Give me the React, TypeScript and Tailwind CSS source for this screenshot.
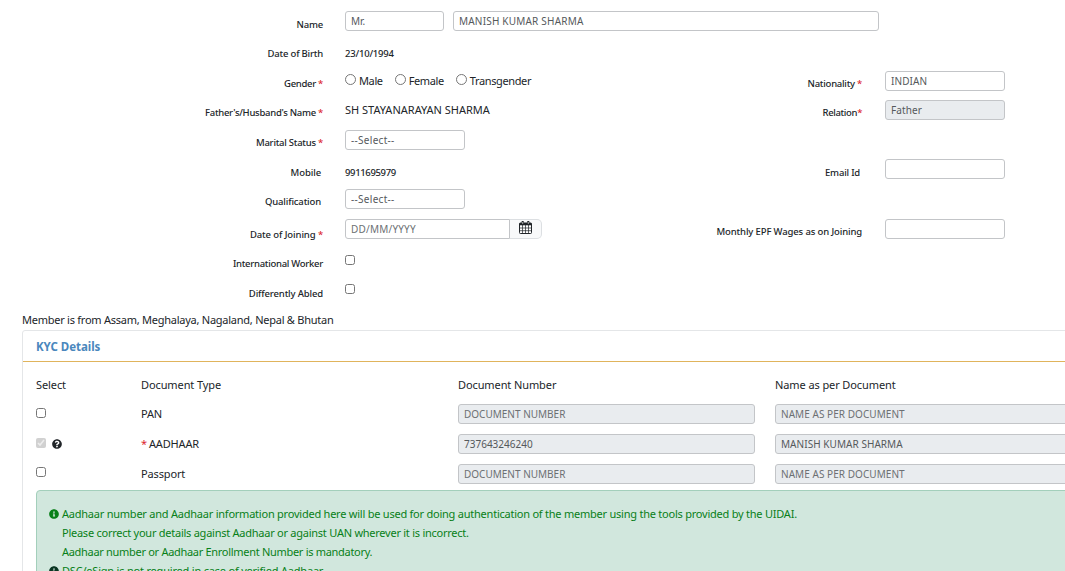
import type { ReactNode } from "react";
import { FaInfoCircle, FaQuestionCircle } from "react-icons/fa";

interface FieldRowProps {
  label: string;
  required?: boolean;
  height?: string;
  labelClass?: string;
  children?: ReactNode;
  right?: ReactNode;
}

const inputBase =
  "block h-5 rounded-[3px] border border-[#c3c5c8] px-[5px] pb-px text-[10px] text-[#55595c] placeholder:text-[#6c7073] placeholder:opacity-100 outline-none";

function Label({ text, required, className = "" }: { text: string; required?: boolean; className?: string }) {
  return (
    <label className={`block text-right text-[9.5px] font-medium leading-5 whitespace-pre text-[#212529] ${className}`}>
      {text}
      {required && <span className="text-[#dc1f2e]">*</span>}
    </label>
  );
}

function FieldRow({
  label,
  required,
  height = "h-[30px]",
  labelClass = "pt-[3px] tracking-[-0.2px]",
  children,
  right,
}: FieldRowProps) {
  return (
    <div className={`flex items-start ${height}`}>
      <Label text={label} required={required} className={`w-[323px] shrink-0 ${labelClass}`} />
      <div className="ml-[22px] flex w-[240px] shrink-0 items-start">{children}</div>
      {right}
    </div>
  );
}

function RightField({ label, required, labelClass = "pt-[3px] tracking-[-0.25px]", value, disabled }: {
  label: string;
  required?: boolean;
  labelClass?: string;
  value?: string;
  disabled?: boolean;
}) {
  return (
    <div className="flex items-start">
      <Label text={label} required={required} className={`w-[277px] shrink-0 ${labelClass}`} />
      <input
        className={`${inputBase} ml-[23px] w-[120px] tracking-[0.1px] ${disabled ? "bg-[#e9ecef]" : "bg-white"}`}
        defaultValue={value}
        disabled={disabled}
      />
    </div>
  );
}

function CalendarIcon() {
  return (
    <svg width="13" height="13" viewBox="0 0 13 13" fill="none">
      <rect x="0.5" y="2" width="12" height="10.5" rx="0.8" fill="#fff" stroke="#212529" />
      <path d="M0.5 2h12v2.3h-12z" fill="#212529" />
      <path d="M3.5 4v8M6.5 4v8M9.5 4v8M1 7h11M1 9.7h11" stroke="#212529" strokeWidth="0.7" />
      <path d="M3.7 0.4v2.8M9.3 0.4v2.8" stroke="#212529" strokeWidth="2" strokeLinecap="round" />
      <path d="M3.7 1v2M9.3 1v2" stroke="#fff" strokeWidth="0.6" />
    </svg>
  );
}

const genders = ["Male", "Female", "Transgender"];

const documents = [
  { type: "PAN", number: "", name: "", checkClass: "mt-[4px]" },
  { type: "AADHAAR", number: "737643246240", name: "MANISH KUMAR SHARMA", required: true, checkClass: "mt-[4px]" },
  { type: "Passport", number: "", name: "", checkClass: "mt-[3px]" },
];

export default function App() {
  return (
    <div className="h-[571px] w-[1065px] overflow-hidden bg-white font-['Noto_Sans','Open_Sans',sans-serif] text-[11px] text-[#212529]">
      {/* Member details */}
      <form className="pt-[11px]">
        <FieldRow label="Name" labelClass="pt-[4px] tracking-[-0.2px]">
          <input className={`${inputBase} w-[99px] shrink-0`} defaultValue="Mr." />
          <input className={`${inputBase} ml-[9px] w-[426px] shrink-0 tracking-[0.2px]`} defaultValue="MANISH KUMAR SHARMA" />
        </FieldRow>
        <FieldRow label="Date of Birth">
          <span className="pt-[3px] text-[9.5px] font-medium leading-5 tracking-[-0.2px]">23/10/1994</span>
        </FieldRow>
        <FieldRow
          label="Gender "
          required
          height="h-[29px]"
          labelClass="pt-[3px] tracking-[-0.3px]"
          right={<RightField label="Nationality " required value="INDIAN" />}
        >
          <div className="flex items-start">
            {genders.map((g) => (
              <label key={g} className="mr-[12px] flex items-start leading-5 tracking-[-0.38px]">
                <input type="radio" name="gender" className="mt-[3px] mr-[3px] size-[11px]" />
                {g}
              </label>
            ))}
          </div>
        </FieldRow>
        <FieldRow
          label="Father's/Husband's Name "
          required
          labelClass="pt-[3px] tracking-[-0.28px]"
          right={<RightField label="Relation" required labelClass="pt-[3px] tracking-[-0.35px]" value="Father" disabled />}
        >
          <span className="leading-5">SH STAYANARAYAN SHARMA</span>
        </FieldRow>
        <FieldRow label="Marital Status " required height="h-[29px]" labelClass="pt-[3px] tracking-[-0.25px]">
          <input className={`${inputBase} w-[120px] tracking-[0.3px]`} defaultValue="--Select--" />
        </FieldRow>
        <FieldRow
          label="Mobile"
          labelClass="pt-[4px] pr-[2px] tracking-[-0.1px]"
          right={<RightField label="Email Id" labelClass="pt-[4px] pr-[2px] tracking-[-0.2px]" />}
        >
          <span className="pt-[4px] text-[9.5px] font-medium leading-5 tracking-[-0.35px]">9911695979</span>
        </FieldRow>
        <FieldRow label="Qualification" labelClass="pt-[3px] pr-[2px] tracking-[-0.15px]">
          <input className={`${inputBase} w-[120px] tracking-[0.3px]`} defaultValue="--Select--" />
        </FieldRow>
        <FieldRow
          label="Date of Joining "
          required
          labelClass="pt-[6px] tracking-[-0.1px]"
          right={<RightField label="Monthly EPF Wages as on Joining" labelClass="pt-[3px] tracking-[-0.13px]" />}
        >
          <input className={`${inputBase} w-[165px] rounded-r-none tracking-[0.2px]`} placeholder="DD/MM/YYYY" />
          <button type="button" className="-ml-px flex h-5 w-[33px] justify-center rounded-r-[5px] border border-[#dcdfe2] border-l-[#c3c5c8] bg-[#f8f9fa] pt-px">
            <CalendarIcon />
          </button>
        </FieldRow>
        <FieldRow label="International Worker" labelClass="pt-[5px] tracking-[-0.28px]">
          <input type="checkbox" className="mt-[6px] size-[10px]" />
        </FieldRow>
        <FieldRow label="Differently Abled" height="h-[31px]" labelClass="pt-[5px] tracking-[-0.15px]">
          <input type="checkbox" className="mt-[5px] size-[10px]" />
        </FieldRow>
      </form>

      <p className="ml-[22px] h-[20px] leading-5 tracking-[-0.25px]">Member is from Assam, Meghalaya, Nagaland, Nepal &amp; Bhutan</p>

      {/* KYC */}
      <section className="ml-[22px] w-[1100px] rounded-tl-[3px] border border-[#e4e6e8]">
        <h2 className="h-[31px] border-b border-b-[#e0b45c] pl-[13px] pt-[6px] text-[11.5px] font-bold leading-5 tracking-[-0.05px] text-[#4a87bd]">
          KYC Details
        </h2>
        <div className="pl-[13px]">
          <div className="flex h-[42px] items-start pt-[13px] leading-5 tracking-[-0.1px]">
            <span className="w-[105px]">Select</span>
            <span className="w-[317px]">Document Type</span>
            <span className="w-[317px]">Document Number</span>
            <span>Name as per Document</span>
          </div>
          {documents.map((doc) => (
            <div key={doc.type} className="flex h-[30px] items-start">
              <div className="flex w-[105px] items-start">
                <input
                  type="checkbox"
                  className={`size-[10px] ${doc.checkClass}`}
                  defaultChecked={doc.required}
                  disabled={doc.required}
                />
                {doc.required && <FaQuestionCircle className="mt-[5px] ml-[6px] size-[10px]" />}
              </div>
              <span className="w-[317px] leading-5 tracking-[-0.15px]">
                {doc.required && <span className="tracking-[-0.5px] text-[#dc1f2e]">* </span>}
                {doc.type}
              </span>
              <input
                className={`${inputBase} w-[297px] bg-[#e9ecef]`}
                placeholder="DOCUMENT NUMBER"
                defaultValue={doc.number}
                disabled
              />
              <input
                className={`${inputBase} ml-[20px] w-[297px] bg-[#e9ecef] tracking-[0.05px]`}
                placeholder="NAME AS PER DOCUMENT"
                defaultValue={doc.name}
                disabled
              />
            </div>
          ))}
          <div className="-mt-[4px] h-[130px] w-[1060px] rounded-[4px] border border-[#a3cfbb] bg-[#d1e7dd] pt-[13px] pl-[12px] leading-[19px] tracking-[-0.23px] text-[#087f18]">
            <div className="flex items-center">
              <FaInfoCircle className="mr-[3px] size-[10px]" />
              Aadhaar number and Aadhaar information provided here will be used for doing authentication of the member using the tools provided by the UIDAI.
            </div>
            <div className="pl-[13px] tracking-[-0.25px]">Please correct your details against Aadhaar or against UAN wherever it is incorrect.</div>
            <div className="pl-[13px] tracking-[-0.3px]">Aadhaar number or Aadhaar Enrollment Number is mandatory.</div>
            <div className="flex items-center tracking-[-0.2px]">
              <FaInfoCircle className="mr-[3px] size-[10px] text-[#0a3622]" />
              DSC/eSign is not required in case of verified Aadhaar.
            </div>
          </div>
        </div>
      </section>
    </div>
  );
}
